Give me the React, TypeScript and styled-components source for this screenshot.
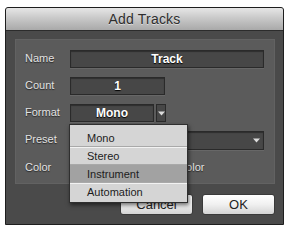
import React from "react";
import styled, { createGlobalStyle } from "styled-components";

const Global = createGlobalStyle`
  html, body { margin: 0; padding: 0; background: #ffffff; }
  body { font-family: "Liberation Sans", Arial, sans-serif; }
  * { box-sizing: border-box; }
`;

const Page = styled.div`
  width: 287px;
  height: 229px;
  padding: 7px 3px 4px 5px;
`;

const Dialog = styled.div`
  width: 279px;
  height: 218px;
  border: 1px solid #1e1e1e;
  border-radius: 3px 3px 0 0;
  background: #4a4a4a;
  display: flex;
  flex-direction: column;
  overflow: visible;
`;

const TitleBar = styled.div`
  height: 23px;
  flex: none;
  display: flex;
  align-items: center;
  justify-content: center;
  background: linear-gradient(#e6e6e6 0%, #c9c9c9 45%, #a9a9a9 100%);
  border-bottom: 1px solid #2c2c2c;
  border-radius: 2px 2px 0 0;
  font-size: 14px;
  color: #2e2e2e;
  text-shadow: 0 1px 0 rgba(255, 255, 255, 0.5);
  letter-spacing: 0.2px;
`;

const Body = styled.div`
  flex: 1;
  display: flex;
  flex-direction: column;
  padding: 8px 8px 9px 9px;
  gap: 10px;
`;

const Panel = styled.div`
  position: relative;
  background: #5b5b5b;
  border: 1px solid #626262;
  padding: 10px 10px 6px 9px;
  display: grid;
  grid-template-columns: 45px 1fr;
  grid-template-rows: 18px 18px 18px 19px 18px;
  row-gap: 9px;
  align-items: center;
`;

const Label = styled.div`
  font-size: 11px;
  color: #e2e2e2;
  text-shadow: 0 1px 1px rgba(0, 0, 0, 0.6);
  margin-top: -3px;
`;

const Field = styled.div<{ $w?: number }>`
  height: 18px;
  width: ${(p) => (p.$w ? `${p.$w}px` : "100%")};
  background: #474747;
  border: 1px solid #2a2a2a;
  box-shadow: inset 0 1px 1px rgba(0, 0, 0, 0.35), 0 1px 0 rgba(255, 255, 255, 0.08);
  display: flex;
  align-items: center;
  justify-content: center;
  font-size: 12px;
  font-weight: bold;
  color: #ffffff;
  text-shadow: 0 1px 1px #000;
`;

const SelectRow = styled.div`
  position: relative;
  display: flex;
  align-items: center;
  gap: 2px;
  height: 18px;
`;

const ArrowBox = styled.div`
  width: 10px;
  height: 18px;
  background: #474747;
  border: 1px solid #2a2a2a;
  display: flex;
  align-items: center;
  justify-content: center;
`;

const PresetField = styled(Field)`
  height: 19px;
  justify-content: flex-end;
  padding-right: 3px;
`;

const ColorContent = styled.div`
  display: flex;
  align-items: center;
  gap: 8px;
  font-size: 11px;
  color: #e2e2e2;
  text-shadow: 0 1px 1px rgba(0, 0, 0, 0.6);
  margin-top: -3px;
`;

const Swatch = styled.div`
  width: 70px;
  height: 14px;
  background: #4a4a4a;
`;

const Menu = styled.div`
  position: absolute;
  top: 20px;
  left: -1px;
  width: 119px;
  background: #d5d5d5;
  border: 1px solid #2f2f2f;
  box-shadow: 1px 2px 4px rgba(0, 0, 0, 0.55);
  padding: 4px 0 1px;
  z-index: 5;
  display: flex;
  flex-direction: column;
`;

const MenuItem = styled.div<{ $active?: boolean; $last?: boolean }>`
  height: 18px;
  display: flex;
  align-items: center;
  padding-left: 17px;
  font-size: 11px;
  color: #1c1c1c;
  background: ${(p) => (p.$active ? "#a2a2a2" : "transparent")};
  border-bottom: ${(p) => (p.$last ? "none" : "1px solid #a9a9a9")};
  box-shadow: ${(p) => (p.$last ? "none" : "0 1px 0 #f2f2f2")};
`;

const Buttons = styled.div`
  display: flex;
  justify-content: flex-end;
  gap: 9px;
`;

const Button = styled.button`
  width: 73px;
  height: 21px;
  padding: 0;
  border: 1px solid #3a3a3a;
  border-radius: 3px;
  background: linear-gradient(#ffffff 0%, #f0f0f0 50%, #d4d4d4 100%);
  font-family: "Liberation Sans", Arial, sans-serif;
  font-size: 13px;
  color: #222222;
`;

const Arrow = () => (
  <svg width="7" height="5" viewBox="0 0 7 5">
    <path d="M0 0.5 L7 0.5 L3.5 4.5 Z" fill="#dcdcdc" />
  </svg>
);

export default function App() {
  const items = ["Mono", "Stereo", "Instrument", "Automation"];
  return (
    <>
      <Global />
      <Page>
        <Dialog>
          <TitleBar>Add Tracks</TitleBar>
          <Body>
            <Panel>
              <Label>Name</Label>
              <Field>Track</Field>
              <Label>Count</Label>
              <Field $w={95}>1</Field>
              <Label>Format</Label>
              <SelectRow>
                <Field $w={84}>Mono</Field>
                <ArrowBox>
                  <Arrow />
                </ArrowBox>
                <Menu>
                  {items.map((it, i) => (
                    <MenuItem key={it} $active={it === "Instrument"} $last={i === items.length - 1}>
                      {it}
                    </MenuItem>
                  ))}
                </Menu>
              </SelectRow>
              <Label>Preset</Label>
              <PresetField>
                <Arrow />
              </PresetField>
              <Label>Color</Label>
              <ColorContent>
                <Swatch />
                <span>Track Color</span>
              </ColorContent>
            </Panel>
            <Buttons>
              <Button>Cancel</Button>
              <Button>OK</Button>
            </Buttons>
          </Body>
        </Dialog>
      </Page>
    </>
  );
}
